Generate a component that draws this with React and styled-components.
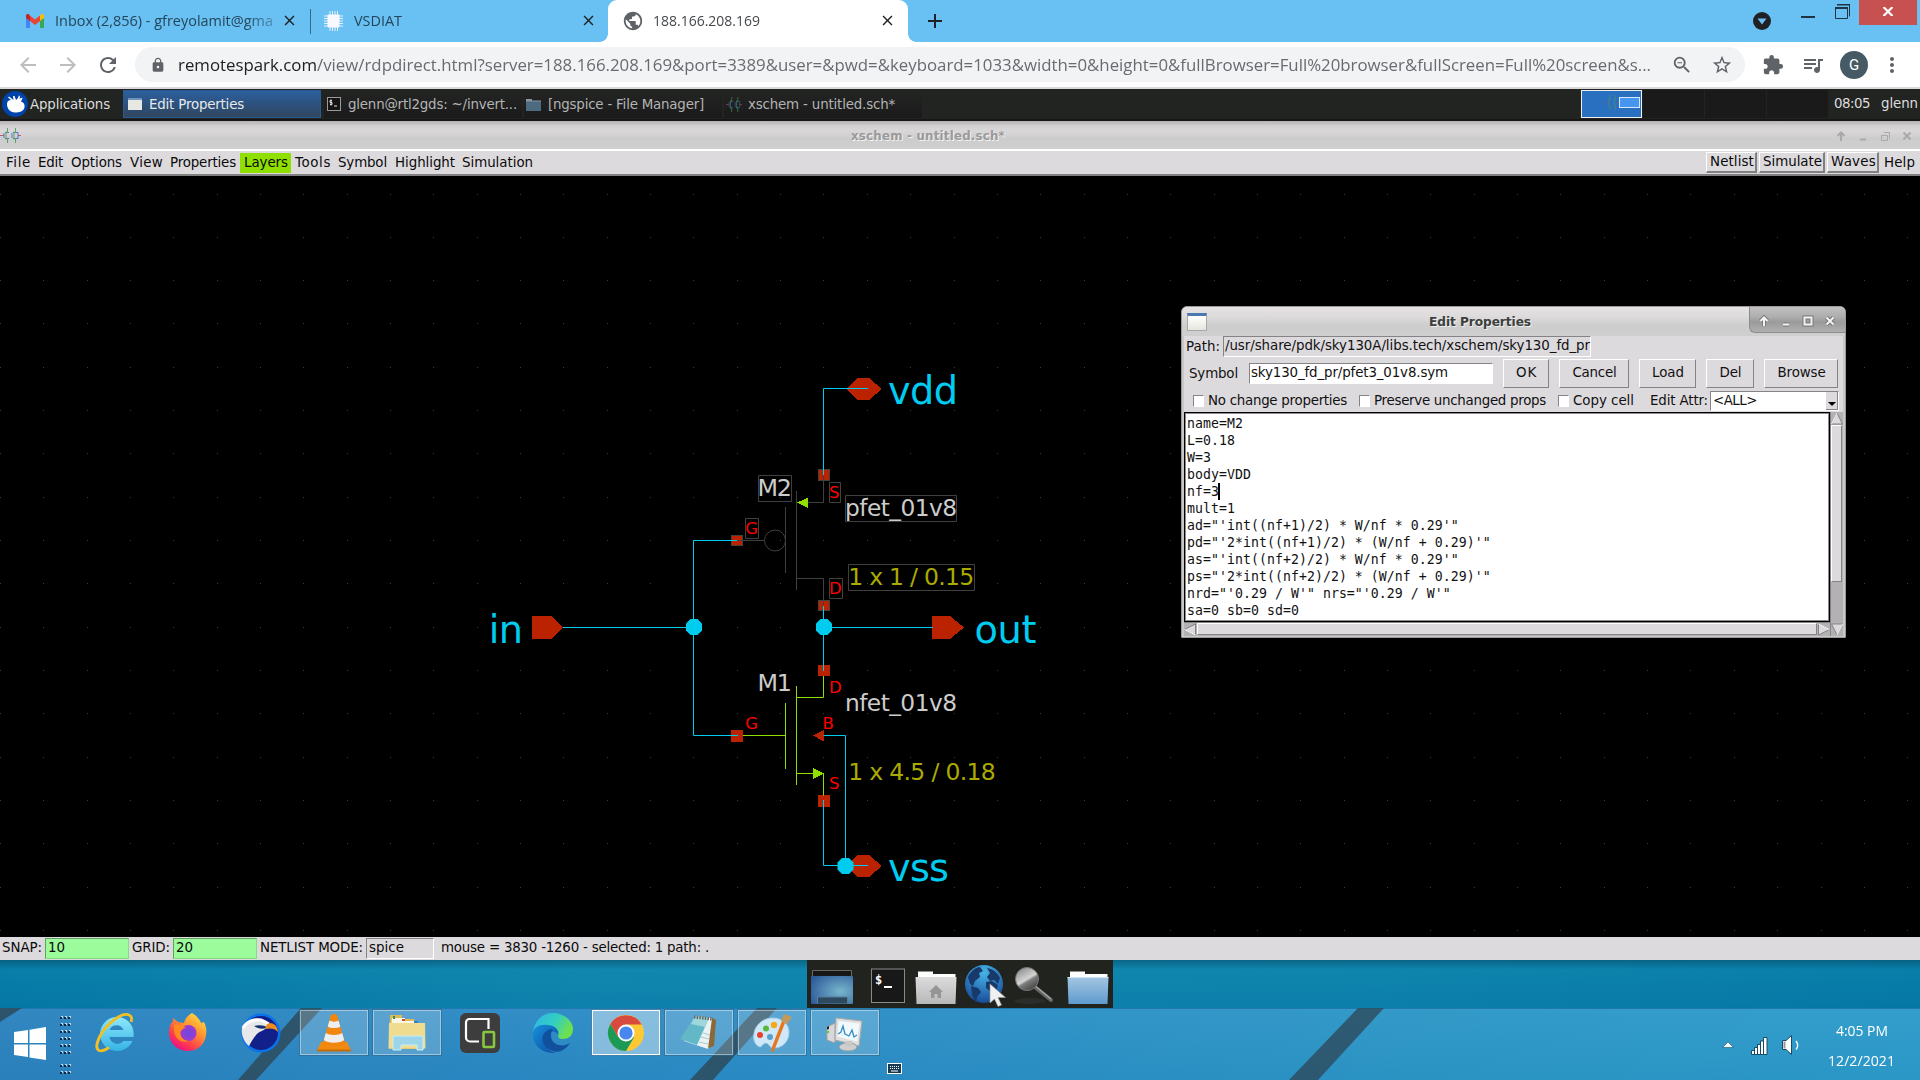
import React, { useLayoutEffect, useRef } from "react";
import styled, { createGlobalStyle, css } from "styled-components";
import {
  MdArrowBack, MdArrowForward, MdRefresh, MdLock, MdZoomOut, MdStarBorder,
  MdExtension, MdQueueMusic, MdMoreVert, MdPublic, MdClose, MdAdd,
} from "react-icons/md";

const GlobalStyle = createGlobalStyle`
  * { box-sizing: border-box; }
  html, body { margin: 0; padding: 0; background: #000; }
  body { width: 1920px; height: 1080px; overflow: hidden; }
  svg { display: block; flex: none; }
`;

const TK = `"DejaVu Sans", Verdana, sans-serif`;
const UI = `"Open Sans", "Noto Sans", sans-serif`;

/* ---------- text that settles into a given width ---------- */

const FitBox = styled.span`
  display: block;
  flex: none;
  width: ${(p) => p.$w}px;
  margin-left: ${(p) => p.$ml || 0}px;
  white-space: pre;
`;
const FitInner = styled.span`
  display: inline-block;
  transform-origin: 0 50%;
`;

function Fit({ w, ml, squeeze, children }) {
  const ref = useRef(null);
  useLayoutEffect(() => {
    const el = ref.current;
    el.style.letterSpacing = "0px";
    el.style.transform = "none";
    const natural = el.getBoundingClientRect().width;
    const target = w + 1;
    if (squeeze) el.style.transform = `scaleX(${target / natural})`;
    else el.style.letterSpacing = `${(target - natural) / el.textContent.length}px`;
  });
  return (
    <FitBox $w={w} $ml={ml}>
      <FitInner ref={ref}>{children}</FitInner>
    </FitBox>
  );
}

/* ---------- page ---------- */

const Screen = styled.div`
  position: relative;
  width: 1920px;
  height: 1080px;
  overflow: hidden;
  display: flex;
  flex-direction: column;
  background: #000;
`;

/* ---------- browser ---------- */

const TabStrip = styled.div`
  display: flex;
  height: 42px;
  flex: none;
  background: #69c0f2;
  font: 14.7px/34px ${UI};
  color: #25465a;
`;
const Tab = styled.div`
  display: flex;
  align-items: center;
  width: ${(p) => p.$w}px;
  height: 42px;
  padding: 0 ${(p) => p.$pr}px 1px ${(p) => p.$pl}px;
  position: relative;
  flex: none;
  ${(p) => p.$active && css`
    background: #fff;
    border-radius: 9px 9px 0 0;
    color: #45484c;
    &::before, &::after {
      content: "";
      position: absolute;
      bottom: 0;
      width: 8px;
      height: 8px;
    }
    &::before { left: -8px; background: radial-gradient(circle at 0 0, transparent 7.5px, #fff 8px); }
    &::after { right: -8px; background: radial-gradient(circle at 100% 0, transparent 7.5px, #fff 8px); }
  `}
`;
const TabTitle = styled.div`
  flex: 1;
  margin-left: ${(p) => p.$ml}px;
  padding-bottom: 2px;
  ${(p) => p.$fade && css`mask-image: linear-gradient(90deg, #000 84%, transparent 104%);`}
`;
const TabClose = styled.div`
  color: #202124;
`;
const TabRule = styled.div`
  width: 1px;
  height: 25px;
  margin-top: 9px;
  background: #38688a;
`;
const NewTab = styled.div`
  margin: 9px 0 0 15px;
  color: #202124;
`;
const WindowControls = styled.div`
  display: flex;
  margin-left: auto;
  padding-right: 3px;
`;
const Update = styled.div`
  width: 18px;
  height: 18px;
  margin: 12px 30px 0 0;
`;
const Minimize = styled.div`
  width: 14px;
  height: 2px;
  margin: 16px 20px 0 0;
  background: #1f3440;
`;
const Restore = styled.div`
  margin: 4px 9px 0 0;
`;
const CloseWindow = styled.div`
  width: 58px;
  height: 25px;
  background: #c75050;
  display: flex;
  align-items: center;
  justify-content: center;
  padding-bottom: 2px;
`;

const Toolbar = styled.div`
  display: flex;
  align-items: center;
  height: 47px;
  flex: none;
  background: #fff;
  border-bottom: 2px solid #dadadb;
  padding: 0 0 0 16px;
  color: #5f6368;
`;
const NavButton = styled.div`
  width: 24px;
  margin-right: ${(p) => p.$mr}px;
  color: ${(p) => (p.$off ? "#bdbec0" : "#5f6368")};
`;
const Omnibox = styled.div`
  display: flex;
  align-items: center;
  width: 1610px;
  height: 35px;
  border-radius: 18px;
  background: #f1f3f4;
  padding: 0 12px 0 15px;
`;
const Url = styled.div`
  flex: 1;
  margin-left: 12px;
  font: 17.2px/32px ${UI};
  color: #686b70;
  & b { font-weight: 400; color: #202124; }
`;
const OmniIcon = styled.div`
  margin-left: ${(p) => p.$ml}px;
`;
const Avatar = styled.div`
  width: 28px;
  height: 28px;
  margin: 0 12px 0 15px;
  border-radius: 50%;
  background: #455a64;
  color: #fff;
  font: 15px/28px Roboto, ${UI};
  text-align: center;
`;

/* ---------- remote desktop panel ---------- */

const Panel = styled.div`
  display: flex;
  height: 32px;
  flex: none;
  background: #222422;
  border-bottom: 2px solid #161616;
  padding-right: 3px;
  font: 13.4px/29px ${TK};
  color: #dcdcdc;
`;
const AppsButton = styled.div`
  display: flex;
  align-items: center;
  width: 123px;
  padding-left: 2px;
`;
const TaskItem = styled.div`
  display: flex;
  align-items: center;
  width: 198px;
  height: 28px;
  margin: 1px ${(p) => p.$mr}px 0 0;
  padding-left: ${(p) => p.$pl}px;
  color: ${(p) => (p.$active ? "#e6e9ec" : "#b4b4b4")};
  background: ${(p) => (p.$active ? "linear-gradient(#2c5f9c, #2d4f78 60%, #31475f)" : "linear-gradient(#232523, #1a1a1a)")};
  border: ${(p) => (p.$active ? "1px solid #275a93" : "0")};
`;
const Pager = styled.div`
  display: flex;
  gap: 1px;
  margin: 1px 0 0 auto;
  height: 28px;
`;
const PagerCell = styled.div`
  width: 61px;
  height: 28px;
  background: #1a1a1a;
  ${(p) => p.$active && css`
    background: #2a70c0;
    border: 1px solid #f0f0f0;
    display: flex;
    align-items: center;
    justify-content: flex-end;
    padding: 0 1px 3px 0;
  `}
`;
const PagerWindow = styled.div`
  width: 21px;
  height: 11px;
  background: #4696f0;
  border: 1px solid #d8e8fa;
`;

/* ---------- schematic editor ---------- */

const TitleBar = styled.div`
  display: flex;
  align-items: center;
  height: 28px;
  flex: none;
  background: linear-gradient(#b4b2b3, #d4d1d3 18%, #dad7d9 35%, #cdcccd 62%, #cfcfcf);
  color: #9a9a9a;
  font: bold 11.8px/26px ${TK};
  text-shadow: 1px 1px 0 #f2f2f2;
  padding: 1px 5px 0 0;
`;
const TitleSpring = styled.div`
  width: ${(p) => p.$w}px;
`;
const TitleGlyphs = styled.div`
  display: flex;
  gap: 6px;
  margin-left: auto;
`;
const MenuBar = styled.div`
  display: flex;
  align-items: center;
  height: 27px;
  flex: none;
  background: #dddade;
  border-top: 2px solid #fff;
  border-bottom: 2px solid #808080;
  padding-right: 6px;
  font: 13.4px/19px ${TK};
  color: #0a0a0a;
`;
const LayersItem = styled.div`
  width: 51px;
  height: 20px;
  margin: 0 4px 0 5px;
  padding-left: 4px;
  background: #8fe000;
`;
const MenuSpring = styled.div`flex: 1;`;
const RaisedItem = styled.div`
  width: ${(p) => p.$w}px;
  height: 21px;
  margin-right: 2px;
  padding-left: 3px;
  line-height: 18px;
  border: solid;
  border-width: 1px 2px 2px 1px;
  border-color: #fff #808080 #808080 #fff;
`;
const Canvas = styled.div`
  flex: none;
  height: 761px;
  background: #000;
`;
const StatusBar = styled.div`
  display: flex;
  align-items: center;
  height: 23px;
  flex: none;
  padding-bottom: 1px;
  background: #dddade;
  font: 13.4px/20px ${TK};
  color: #0a0a0a;
`;
const StatusField = styled.div`
  width: ${(p) => p.$w}px;
  height: 21px;
  margin: 0 3px 0 4px;
  padding-left: 2px;
  line-height: 18px;
  background: ${(p) => (p.$green ? "#9cfc9c" : "#dddade")};
  border: 1px solid;
  border-color: ${(p) => (p.$green ? "#629f62 #84dc84 #84dc84 #629f62" : "#858385 #fff #fff #858385")};
`;

const Dialog = styled.div`
  position: absolute;
  left: 1181px;
  top: 306px;
  width: 665px;
  height: 332px;
  background: #dddade;
  border: 1px solid #9b9b9b;
  border-radius: 6px 6px 1px 1px;
  overflow: hidden;
  font: 13.4px/20px ${TK};
  color: #111;
  display: flex;
  flex-direction: column;
`;
const DialogTitle = styled.div`
  display: flex;
  align-items: center;
  height: 29px;
  flex: none;
  padding-left: 5px;
  background: linear-gradient(#e6e2e5, #dcdadb 35%, #cdcdcd 65%, #cfcfcf);
  font: bold 12.2px/26px ${TK};
  color: #3c3f3c;
  text-shadow: 1px 1px 0 #f0f0f0;
`;
const DialogIcon = styled.div`
  width: 20px;
  height: 18px;
  background: linear-gradient(#fff, #e4e6dc);
  border: 1px solid #a8a8a8;
  border-top: 3px solid #4a78b0;
`;
const DialogButtons = styled.div`
  display: flex;
  gap: 6px;
  align-self: flex-start;
  margin-left: auto;
  width: 96px;
  height: 26px;
  padding: 6px 0 0 6px;
  background: linear-gradient(#c2c0c2, #aeadae 40%, #9c9b9c 60%, #b0afb0);
  border-left: 1px solid #8c8c8c;
  border-bottom: 1px solid #8c8c8c;
  border-bottom-left-radius: 6px;
`;
const DialogBody = styled.div`
  flex: 1;
  display: flex;
  flex-direction: column;
  border: solid #c8c8c8;
  border-width: 0 2px 2px 2px;
`;
const Row = styled.div`
  display: flex;
  align-items: center;
  flex: none;
  height: ${(p) => p.$h}px;
  padding: 0 0 1px ${(p) => p.$pl}px;
`;
const Entry = styled.div`
  width: ${(p) => p.$w}px;
  height: 21px;
  margin-left: ${(p) => p.$ml}px;
  padding-left: 1px;
  line-height: 18px;
  background: ${(p) => (p.$white ? "#fff" : "#dddade")};
  border: 1px solid;
  border-color: #858385 #fff #fff #858385;
`;
const TkButton = styled.div`
  width: ${(p) => p.$w}px;
  height: 29px;
  margin-left: 10px;
  line-height: 26px;
  display: flex;
  justify-content: center;
  border: 1px solid;
  border-color: #fff #858385 #858385 #fff;
`;
const Check = styled.div`
  width: 11px;
  height: 12px;
  margin: 0 4px 0 ${(p) => p.$ml}px;
  background: #fff;
  border: 1px solid;
  border-color: #858385 #fff #fff #858385;
`;
const Combo = styled.div`
  display: flex;
  width: 129px;
  height: 20px;
  margin-left: 3px;
  padding-left: 2px;
  line-height: 18px;
  background: #fff;
  border: 1px solid;
  border-color: #858385 #fff #fff #858385;
`;
const ComboArrow = styled.div`
  display: flex;
  align-items: flex-end;
  justify-content: center;
  width: 12px;
  height: 18px;
  padding-bottom: 3px;
  margin-left: auto;
  background: #dddade;
  border-right: 1px solid #858385;
  border-bottom: 1px solid #858385;
`;
const EditorGrid = styled.div`
  display: grid;
  grid-template-columns: 646px 13px;
  grid-template-rows: 210px 14px;
`;
const Editor = styled.div`
  background: #fff;
  border: 1px solid #000;
  outline: 1px solid #8d8b8d;
  outline-offset: -2px;
  padding: 2px 0 0 2px;
  font: 13.2px/17px "DejaVu Sans Mono", "Liberation Mono", monospace;
  letter-spacing: 0.054px;
  color: #111;
  white-space: pre;
  overflow: hidden;
`;
const Line = styled.div`
  display: flex;
  height: 17px;
`;
const Caret = styled.span`
  width: 2px;
  height: 17px;
  margin-left: -1px;
  background: #000;
`;
const VScroll = styled.div`
  grid-row: 1 / 3;
  grid-column: 2;
  display: flex;
  flex-direction: column;
  justify-content: space-between;
  background: #b4b1b4;
  border-left: 1px solid #858385;
`;
const ScrollRun = styled.div`
  flex: 1;
`;
const HScroll = styled.div`
  display: flex;
  background: #b4b1b4;
  border-top: 1px solid #858385;
`;
const Thumb = styled.div`
  width: ${(p) => p.$w}px;
  height: ${(p) => p.$h}px;
  margin: ${(p) => p.$m || "0"};
  background: #dddade;
  border: 1px solid;
  border-color: #fff #858385 #858385 #fff;
`;

/* ---------- wallpaper, dock, taskbar ---------- */

const Wallpaper = styled.div`
  display: flex;
  justify-content: center;
  height: 48px;
  flex: none;
  background:
    linear-gradient(rgba(0, 50, 75, .4), transparent 20%),
    linear-gradient(90deg, transparent, rgba(40, 160, 190, .24) 30%, rgba(40, 160, 190, .2) 70%, transparent),
    linear-gradient(#0a80aa, #0577a5);
`;
const Dock = styled.div`
  display: flex;
  width: 306px;
  height: 48px;
  background: #21231f;
`;
const TaskBar = styled.div`
  position: relative;
  height: 72px;
  flex: none;
  display: flex;
  background: linear-gradient(rgba(255, 255, 255, .04), rgba(0, 0, 0, .02)), linear-gradient(90deg, #2a82be, #2a8cc6 40%, #2b96c6 75%, #2b9aca);
  border-top: 1px solid #2079ae;
`;
const Shades = styled.div`
  position: absolute;
  inset: -1px 0 0 0;
`;
const StartArea = styled.div`
  display: flex;
  width: 80px;
  padding: 18px 0 0 14px;
  position: relative;
`;
const Grip = styled.div`
  margin: -12px 0 0 14px;
`;
const TaskButton = styled.div`
  position: relative;
  display: flex;
  align-items: center;
  justify-content: center;
  width: 70px;
  height: 47px;
  margin-right: 3px;
  flex: none;
  ${(p) => p.$on && css`
    background: rgba(255, 255, 255, ${p.$focus ? 0.42 : 0.2});
    border: 1px solid rgba(20, 80, 120, .55);
    box-shadow: inset 0 0 0 1px rgba(255, 255, 255, ${p.$focus ? 0.95 : 0.42});
  `}
`;
const Keyboard = styled.div`
  margin: 54px 0 0 4px;
`;
const Tray = styled.div`
  display: flex;
  margin-left: auto;
  padding-right: 25px;
`;
const TrayIcon = styled.div`
  margin: ${(p) => p.$mt}px 0 0 ${(p) => p.$ml || 0}px;
`;
const Clock = styled.div`
  display: flex;
  flex-direction: column;
  align-items: center;
  gap: 10px;
  width: 68px;
  margin: 11px 0 0 27px;
  font: 14.7px/20px ${UI};
  color: #fff;
`;

/* ---------- small drawings ---------- */

const Gmail = () => (
  <svg width="18" height="14" viewBox="0 0 18 14">
    <path d="M0 2v11a1 1 0 0 0 1 1h3V5z" fill="#4285f4" />
    <path d="M18 2v11a1 1 0 0 1-1 1h-3V5z" fill="#34a853" />
    <path d="M14 1.500V7l4-3V2c0-2-2-2.500-3-1.500z" fill="#fbbc04" />
    <path d="M0 2v2l4 3V1.500L3 .5C2-.5 0 0 0 2z" fill="#c5221f" />
    <path d="M4 1.500V7l5 4 5-4V1.500L9 5.400z" fill="#ea4335" />
  </svg>
);
const Chip = () => (
  <svg width="19" height="20" viewBox="0 0 19 20">
    <path d="M6 0v20M8.500 0v20M11 0v20M13.500 0v20M0 5h19M0 7.500h19M0 10h19M0 12.500h19M0 15h19" stroke="#e6f3fd" strokeWidth="1" />
    <rect x="3.500" y="3.500" width="12" height="13" rx="1" fill="#faf8ff" />
  </svg>
);
const Mouse = () => (
  <svg width="26" height="26" viewBox="0 0 26 26">
    <circle cx="13" cy="13" r="13" fill="#0044aa" />
    <path d="M5 13c0-3 2-4 4-4L6 6.500l1-1L11.500 9 11 5h1.500l1.500 4c2-1 2-3 3-4.500 1.200 0 1 2 .5 3.500 1.500-1 2-1.500 3-1 0 1.500-1.500 2.500-1.500 3.500 3 1 4 3 3.500 6-1 4-5 5-9.500 5-5 0-8-4-8-8.500z" fill="#fff" />
  </svg>
);
const SmallWindow = () => (
  <svg width="14" height="12" viewBox="0 0 14 12">
    <rect width="14" height="12" fill="#e8e8e2" /><rect width="14" height="2" fill="#6f94bd" />
  </svg>
);
const SmallTerm = () => (
  <svg width="14" height="14" viewBox="0 0 14 14">
    <rect x=".5" y=".5" width="13" height="13" fill="#141414" stroke="#9a9a9a" />
    <path d="M5 3.500H3v2h2v2H3M4 2.500v6M7 9h3" stroke="#ddd" fill="none" />
  </svg>
);
const SmallFolder = () => (
  <svg width="15" height="13" viewBox="0 0 15 13">
    <path d="M0 1h6v1.500h9V13H0z" fill="#8a959d" /><rect y="3.500" width="15" height="9.500" fill="#4c6a80" />
  </svg>
);
const MosIcon = ({ w = 21, dim }) => (
  <svg width={w} height="15" viewBox="0 0 21 15" preserveAspectRatio="none" fill="none" opacity={dim ? 0.7 : 0.85}>
    <path d="M0 7.500h3M18 7.500h3" stroke="#d04040" />
    <path d="M4 5v5M4 7.500h-1M5 4.500h4M5 10.500h4M13 4.500h5M13 10.500h5M12 5v5M18 4.500v6" stroke="#3d63c8" />
    <path d="M7.500 0v5M7.500 10v5M15.500 0v5M15.500 10v5M6 3.500v8M14 3.500v8" stroke="#4a9a58" />
  </svg>
);

const WinGlyph = ({ kind, color, outline }) => {
  const d = {
    up: "M8 13V5M4.500 8 8 4.500 11.500 8",
    min: "M5 11.500h6",
    max: "M4.500 4.500h7v7h-7z",
    restore: "M4.500 7.500h6v5h-6zM7 4.500h5.500v6",
    close: "M4.500 4.500l7 7M11.500 4.500l-7 7",
  }[kind];
  return (
    <svg width="16" height="16" viewBox="0 0 16 16" fill="none">
      {outline && <path d={d} stroke={outline} strokeWidth="4" />}
      <path d={d} stroke={color} strokeWidth={kind === "restore" ? 1 : 2} />
    </svg>
  );
};
const Arrow = ({ dir }) => {
  const r = { up: 0, right: 90, down: 180, left: 270 }[dir];
  return (
    <svg width="12" height="13" viewBox="0 0 12 12">
      <g transform={`rotate(${r} 6 6)`}>
        <path d="M6 .5 11.500 11.500H.5z" fill="#dddade" stroke="#858385" />
        <path d="M.5 11.500 6 .5" stroke="#fff" />
      </g>
    </svg>
  );
};

/* ---------- schematic ---------- */

const PITCH = 43.35;
const gridDots = [];
for (let r = 0; r < 18; r += 1)
  for (let c = 0; c < 45; c += 1)
    gridDots.push([Math.round(c * PITCH - 0.2), Math.round(193.5 + r * 43.33)]);

const Label = ({ x, y, s, w, fill, children }) => (
  <text x={x} y={y} fontSize={s} fill={fill} textLength={w} fontFamily={'"DejaVu Sans", sans-serif'}>{children}</text>
);
const Octagon = ({ x, y }) => (
  <path d={`M${x - 3.5} ${y - 8}h7l4.500 4.500v7l-4.500 4.500h-7l-4.500-4.500v-7z`} fill="#00ccf0" />
);

function Schematic() {
  const C = "#00ccf0", R = "#bb2200", G = "#8fe000", K = "#404040", T = "#ff0000", W = "#cccccc", Y = "#aaaa00";
  return (
    <svg width="1920" height="761" viewBox="0 176 1920 761">
      <g fill="#3c3c3c" shapeRendering="crispEdges">
        {gridDots.map(([x, y]) => <rect key={`${x}-${y}`} x={x} y={y} width="1" height="1" />)}
      </g>
      <g fill={R} shapeRendering="crispEdges">
        <path d="M532 616h19l12.500 11.500L551 639h-19zM932 616h18l14 11.500L950 639h-18zM846 389l11.500-11h11.500l13 11-13 11h-11.500zM846 866l11.500-11h11.500l13 11-13 11h-11.500z" />
        <path d="M731 535h12v11h-12zM731 730h12v12h-12zM818 469h12v12h-12zM818 600h12v11h-12zM818 795h12v12h-12zM813 735.500l11-5.500v11.500z" />
      </g>
      <g fill="none" stroke={K}>
        <path d="M731.500 535.500h11v10h-11zM818.500 469.500h11v11h-11zM818.500 600.500h11v10h-11z" />
        <path d="M737 540.500h27M785.500 507v66M796.500 491v99M796.500 502.500h27v-27M796.500 578.500h27v27M807.500 497.500v10" />
        <circle cx="775" cy="540.500" r="10.500" />
        <path d="M758.500 475.500h33v26h-33zM829.500 482.500h11v20h-11zM745.500 518.500h13v20h-13zM829.500 578.500h13v20h-13zM845.500 495.500h111v26h-111zM848.500 564.500h126v26h-126z" />
      </g>
      <g fill="none" stroke={G}>
        <path d="M823.500 671v26.500h-27M796.500 686v99M785.500 703v66M737 735.500h48M796.500 773.500h27v22" />
      </g>
      <path d="M797 502.500l10.500-4.500v9.500zM813 768l11 5.500-11 5.500z" fill={G} shapeRendering="crispEdges" />
      <path d="M818 665h12v11h-12zM731 730h12v12h-12z" fill={R} />
      <g fill="none" stroke={C}>
        <path d="M563 627.500h130M737 540.500h-43.500v195h44.500M868 388.500h-44.500V475M823.500 606v65M824 627.500h109M823.500 800v65.500h44.500M823.500 735.500h22v130" />
      </g>
      <Octagon x={694} y={627} /><Octagon x={824} y={627} /><Octagon x={845.5} y={866} />
      <Label x={488.8} y={643} s={38.3} w={34.3} fill={C}>in</Label>
      <Label x={888} y={404} s={38.3} w={70} fill={C}>vdd</Label>
      <Label x={974.5} y={643} s={38.3} w={62} fill={C}>out</Label>
      <Label x={888} y={881} s={38.3} w={61} fill={C}>vss</Label>
      <Label x={757.5} y={496} s={23.8} w={34.5} fill={W}>M2</Label>
      <Label x={757.5} y={691} s={23.8} w={34.5} fill={W}>M1</Label>
      <Label x={845} y={516} s={23.3} w={112} fill={W}>pfet_01v8</Label>
      <Label x={845} y={711} s={23.3} w={112} fill={W}>nfet_01v8</Label>
      <Label x={848.2} y={585} s={23.5} w={126} fill={Y}>1 x 1 / 0.15</Label>
      <Label x={848.2} y={780} s={23.5} w={147.5} fill={Y}>1 x 4.5 / 0.18</Label>
      <Label x={745.3} y={533.5} s={16.5} fill={T}>G</Label>
      <Label x={745.3} y={728.5} s={16.5} fill={T}>G</Label>
      <Label x={829} y={497.5} s={16.5} fill={T}>S</Label>
      <Label x={829} y={789} s={16.5} fill={T}>S</Label>
      <Label x={829} y={594.3} s={16.5} fill={T}>D</Label>
      <Label x={829} y={693} s={16.5} fill={T}>D</Label>
      <Label x={822.5} y={729} s={16.5} fill={T}>B</Label>
    </svg>
  );
}

/* ---------- dock drawing ---------- */

const DockArt = () => (
  <svg width="306" height="48" viewBox="807 960 306 48">
    <defs>
      <radialGradient id="desk" cx=".7" cy=".55" r=".8"><stop offset="0" stopColor="#78b6cc" /><stop offset="1" stopColor="#2d5a9a" /></radialGradient>
      <linearGradient id="fgray" x2="0" y2="1"><stop offset="0" stopColor="#dcdcdc" /><stop offset="1" stopColor="#b8b8b8" /></linearGradient>
      <linearGradient id="fblue" x2="0" y2="1"><stop offset="0" stopColor="#a4c6e2" /><stop offset="1" stopColor="#5f9bce" /></linearGradient>
      <radialGradient id="glb" cx=".5" cy=".2" r=".9"><stop offset="0" stopColor="#46b4e6" /><stop offset="1" stopColor="#123f90" /></radialGradient>
      <linearGradient id="lens" x1=".2" x2=".8" y2="1"><stop offset="0" stopColor="#8a8a8a" /><stop offset=".5" stopColor="#d4d4d4" /><stop offset=".6" stopColor="#7c7c7c" /><stop offset="1" stopColor="#3c3c3c" /></linearGradient>
    </defs>
    <path d="M812.500 976v-5.500h39v5.500" fill="#161716" stroke="#686868" />
    <rect x="811" y="976" width="42" height="28" rx="1" fill="url(#desk)" />
    <path d="M817.500 1003.500v-6.500h30v6.500" fill="#2e4a5e" stroke="#547f9e" />
    <rect x="871.5" y="969" width="33" height="33.500" fill="#171817" stroke="#8a8a8a" />
    <text x="875" y="984" fontSize="12" fontWeight="700" fontFamily="DejaVu Sans Mono, monospace" fill="#fff">$</text>
    <path d="M884 987h8" stroke="#fff" strokeWidth="2" />
    <path d="M918 973v-1.500h15v2.500h22.500v4h-37.500z" fill="#fdfdfd" /><path d="M915.500 977h41l-1 27h-39z" fill="url(#fgray)" />
    <path d="M936 985l7 7h-2v6h-3.500v-4h-3v4H931v-6h-2z" fill="#959595" />
    <circle cx="984" cy="984" r="19" fill="url(#glb)" />
    <path d="M968 977c3-6 8-10 12-10l3 4-4 2 1 4-5 4-2 5-3-2zM971 986l7 2 3 4-4 5-1 6-4-8zM987 968c6 1 11 5 13 10l-2 6-4-4-4 1-3-4 3-4zM986 982l6-1 6 4-2 8-4 5-2-7-4-3z" fill="#173a6a" />
    <path d="M990 984v19l4.500-4 3.500 7.500 3.500-1.500-3.500-7.500h7.500z" fill="#f0f0f0" stroke="#999" strokeWidth=".6" />
    <ellipse cx="1030" cy="1001" rx="16" ry="3" fill="#2c2c2c" />
    <path d="M1036 988l15 12" stroke="#666" strokeWidth="4" strokeLinecap="round" /><path d="M1036 986.500l15 12.500" stroke="#aaa" strokeWidth="1.200" />
    <circle cx="1027" cy="979" r="11.500" fill="url(#lens)" stroke="#777" />
    <path d="M1070 973v-1.500h15v2.500h22.500v4h-37.500z" fill="#fdfdfd" /><path d="M1067.500 977h41l-1 27h-39z" fill="url(#fblue)" />
    <path d="M1067.500 977.500h41" stroke="#cfe2f2" />
  </svg>
);

/* ---------- taskbar icons (all on a 40 unit square) ---------- */

const Icon40 = ({ children }) => <svg width="40" height="40" viewBox="0 0 40 40">{children}</svg>;

const icons = {
  ie: (
    <Icon40>
      <defs><linearGradient id="ieb" x2="0" y2="1"><stop offset="0" stopColor="#8fe8fb" /><stop offset="1" stopColor="#35b3e6" /></linearGradient></defs>
      <path d="M22 4a17 17 0 1 0 15.500 24h-9a8 8 0 0 1-14-4H38.500C40 12 32 4 22 4zm-7.500 13a7.500 7.500 0 0 1 14 0z" fill="url(#ieb)" fillRule="evenodd" />
      <path d="M36 9c1-3 1-6-2-7C27-1 12 10 5 23 1 31 1 36 4 37.500c3 1 7-1 10-3" fill="none" stroke="#f1c023" strokeWidth="2.800" />
    </Icon40>
  ),
  firefox: (
    <Icon40>
      <defs>
        <linearGradient id="ffo" x1="1" x2=".3" y2="1"><stop offset="0" stopColor="#fff04a" /><stop offset=".45" stopColor="#ff9430" /><stop offset=".8" stopColor="#ff3850" /><stop offset="1" stopColor="#e81088" /></linearGradient>
        <radialGradient id="ffp"><stop offset="0" stopColor="#6a48e0" /><stop offset="1" stopColor="#a03ad0" /></radialGradient>
      </defs>
      <path d="M24 0c6 4 8 7 9 10l3-1c2 4 3 8 2 13C37 32 29 38 20 38 9 38 1 30 1 20c0-5 1-9 4-12v-3l5 4 6 1c1-4 4-8 8-10z" fill="url(#ffo)" />
      <circle cx="20.5" cy="20" r="8" fill="url(#ffp)" />
      <path d="M6 12c4-1 9 0 12 3-3 0-4 2-6 4 0 5 4 9 9 9-9 3-16-3-15-16z" fill="#ff8a20" />
    </Icon40>
  ),
  eagle: (
    <Icon40>
      <circle cx="20" cy="20" r="19.500" fill="#0a72ea" /><circle cx="20" cy="20" r="17" fill="#12208a" />
      <path d="M1 15C4 8 12 4 20 6c5 1 8 3 9 6l-4 3c-2 3-7 3-10 7-3 4-5 7-7 11C3 29 0 22 1 15z" fill="#e8e8ea" />
      <path d="M2 15C6 8 14 6 20 7l8 4" stroke="#fff" strokeWidth="3" fill="none" />
      <path d="M13 13c3-1 7-1 11 0l2 2-5 .800c-3 0-5-1-8-2.800z" fill="#12306e" />
      <path d="M26 11c5-2 10 0 11 8-3-4-8-4-13-3z" fill="#f08c1c" />
    </Icon40>
  ),
  vlc: (
    <Icon40>
      <path d="M7 29h26l4 8.500H3z" fill="#f08a10" /><path d="M3 36.500h34v2H3z" fill="#c96a05" />
      <path d="M17 2c1-1.500 5-1.500 6 0l8 28c-3 4-19 4-22 0z" fill="#f3860c" />
      <path d="M15.500 7.500c2 1.500 7 1.500 9 0l1.800 6c-3 2-9.500 2-12.600 0zM11.800 20c3.500 2.500 13 2.500 16.400 0l2 7c-4 3.500-16.500 3.500-20.400 0z" fill="#eeeeee" />
    </Icon40>
  ),
  explorer: (
    <Icon40>
      <path d="M3 2h12v4h12l1 4h9v26H2z" fill="#d9bb5c" /><path d="M5 5h13v3h13v3h7v5H4z" fill="#fbf7e6" />
      <path d="M2 10h36l.5 25.500H1.500z" fill="#f0dc8e" />
      <path d="M6 3h2v3H6z" fill="#3a8e50" /><path d="M15 6h3v2h-3z" fill="#d04a30" /><path d="M27 8h4v2h-4z" fill="#3a80c0" />
      <path d="M6 23h30v14h-6v-5H14v5H6z" fill="#9cd5ea" stroke="#cceef8" />
    </Icon40>
  ),
  screens: (
    <Icon40>
      <rect width="40" height="40" rx="6" fill="#3d3d3d" />
      <path d="M19 28.500h-9a4 4 0 0 1-4-4v-15a3.500 3.500 0 0 1 3.500-3.500H28.500v10" fill="none" stroke="#fff" strokeWidth="2.200" />
      <rect x="23.500" y="19" width="10.500" height="15" rx="1" fill="none" stroke="#8bc63f" strokeWidth="2.600" />
    </Icon40>
  ),
  edge: (
    <Icon40>
      <defs>
        <linearGradient id="ed1" x2="1" y2=".4"><stop offset="0" stopColor="#2db4ea" /><stop offset=".6" stopColor="#34cfc0" /><stop offset="1" stopColor="#6ee04e" /></linearGradient>
        <linearGradient id="ed2" x2="1" y2="1"><stop offset="0" stopColor="#1690dc" /><stop offset="1" stopColor="#0c4ba0" /></linearGradient>
      </defs>
      <path d="M0 20C1 8 9 0 20 0s20 8 20 16c0 7-5 10-10 10-4 0-5-1.500-5-3 2-4-1-9-8-9C8 14 2 17 0 20z" fill="url(#ed1)" />
      <path d="M0 20c1-6 7-9 14-8 8 0 12 5 11 9-6-5-13-2-13 6 0 8 6 13 12 13-14 1-25-7-24-20z" fill="url(#ed2)" />
      <path d="M18 16c-9 2-12 12-4 19 7 6 17 5 23-5-6 4-15 3-18-3-2-4-1-8 1-10z" fill="#11509c" />
    </Icon40>
  ),
  chrome: (
    <Icon40>
      <circle cx="20" cy="20" r="18" fill="#fcc934" />
      <path d="M4.400 11A18 18 0 0 1 35.600 11.500H20L12 24z" fill="#d94a3e" />
      <path d="M4.400 11A18 18 0 0 0 20 38l8-13.500-8-4.500-8 4z" fill="#1b9a57" />
      <circle cx="20" cy="20" r="8.500" fill="#fff" /><circle cx="20" cy="20" r="6.600" fill="#4a86f0" />
    </Icon40>
  ),
  notepad: (
    <Icon40>
      <path d="M32 4l5 3-2 26-8 3z" fill="#8a6838" />
      <path d="M16 3l17 2-4 31-24-8z" fill="#e9f3f3" />
      <path d="M16 3l14 2L18 32 1 26z" fill="#62b8c6" /><path d="M16 3l14 2-4 9-14-3z" fill="#9fd8dc" />
      <path d="M15 4l18 2" stroke="#666" strokeWidth="3.200" strokeDasharray="1.500 1.200" />
      <path d="M24 20l7 2M22 24l8 2M20 29l9 2" stroke="#b0c8cc" />
    </Icon40>
  ),
  paint: (
    <Icon40>
      <path d="M2 27C0 15 9 5 21 5c10 0 16 7 16 14 0 9-6 16-15 16-5 0-4-4-8-5-4 0-4 6-8 3-2-1-3-3-4-6z" fill="#cfe8f8" stroke="#a4cde8" />
      <circle cx="8" cy="22" r="3" fill="#e8402c" /><circle cx="14" cy="15.500" r="3" fill="#5cb83c" /><circle cx="22" cy="12" r="3.200" fill="#f5a81c" />
      <circle cx="18" cy="24" r="3" fill="#58a0cc" />
      <path d="M33 10 22 38l-3 1 1-5 10-26z" fill="#e8761c" /><path d="M29 8l3-7 8 3-5 7z" fill="#c49a5c" />
    </Icon40>
  ),
  monitor: (
    <Icon40>
      <path d="M2 14l8-4v20l-8-3z" fill="#d8d8d8" stroke="#a0a0a0" /><path d="M2 14l2-1v3l-2 .5z" fill="#222" /><circle cx="3" cy="19" r="1.200" fill="#5bd02a" />
      <path d="M11 5l26 3-3 25-24-6z" fill="#e0e0e0" stroke="#a8a8a8" /><path d="M13.500 8l21 2.500-2.500 18-19.500-5z" fill="#f2f9fd" />
      <path d="M13 21l3-2 2-6 2 8 4 2 3-6 2 7 3-2" fill="none" stroke="#2f8cc8" strokeWidth="1.300" />
      <ellipse cx="23" cy="34" rx="9" ry="4" fill="#cfcfcf" stroke="#9c9c9c" /><path d="M20 28h7v5h-7z" fill="#c8c8c8" />
    </Icon40>
  ),
};

const TASKS = [
  ["ie"], ["firefox"], ["eagle"], ["vlc", 1], ["explorer", 1], ["screens"], ["edge"],
  ["chrome", 1, 1], ["notepad", 1], ["paint", 1], ["monitor", 1],
];

const PROPS = [
  "name=M2", "L=0.18", "W=3", "body=VDD", "nf=3", "mult=1",
  `ad="'int((nf+1)/2) * W/nf * 0.29'"`,
  `pd="'2*int((nf+1)/2) * (W/nf + 0.29)'"`,
  `as="'int((nf+2)/2) * W/nf * 0.29'"`,
  `ps="'2*int((nf+2)/2) * (W/nf + 0.29)'"`,
  `nrd="'0.29 / W'" nrs="'0.29 / W'"`,
  "sa=0 sb=0 sd=0",
];

const gripRows = [1, 8, 15, 22, 29, 36, 49, 56];

export default function App() {
  return (
    <Screen>
      <GlobalStyle />
      <TabStrip>
        <Tab $w={310} $pl={26} $pr={12}>
          <Gmail />
          <TabTitle $ml={11} $fade><Fit w={217} squeeze>Inbox (2,856) - gfreyolamit@gma</Fit></TabTitle>
          <TabClose><MdClose size={17} /></TabClose>
        </Tab>
        <TabRule />
        <Tab $w={297} $pl={13} $pr={11}>
          <Chip />
          <TabTitle $ml={11}><Fit w={47} squeeze>VSDIAT</Fit></TabTitle>
          <TabClose><MdClose size={17} /></TabClose>
        </Tab>
        <Tab $w={300} $active $pl={14} $pr={12}>
          <MdPublic size={22} color="#5f6368" />
          <TabTitle $ml={9}><Fit w={106} squeeze>188.166.208.169</Fit></TabTitle>
          <TabClose><MdClose size={17} /></TabClose>
        </Tab>
        <NewTab><MdAdd size={24} /></NewTab>
        <WindowControls>
          <Update>
            <svg width="18" height="18" viewBox="0 0 18 18"><circle cx="9" cy="9" r="9" fill="#202124" /><path d="M4.500 6.500h9L9 12.500z" fill="#69c0f2" /></svg>
          </Update>
          <Minimize />
          <Restore>
            <svg width="15" height="15" viewBox="0 0 15 15" fill="none" stroke="#1f3440"><path d="M2 .5h12.500v12M.5 4h12v10.500H.5z" /><path d="M0 4h13M2 .5h13" strokeWidth="2" /></svg>
          </Restore>
          <CloseWindow>
            <svg width="12" height="9" viewBox="0 0 12 9"><path d="M1.500 0 10.500 9M10.500 0 1.500 9" stroke="#fff" strokeWidth="2.200" /></svg>
          </CloseWindow>
        </WindowControls>
      </TabStrip>

      <Toolbar>
        <NavButton $off $mr={16}><MdArrowBack size={24} /></NavButton>
        <NavButton $off $mr={16}><MdArrowForward size={24} /></NavButton>
        <NavButton $mr={15}><MdRefresh size={24} /></NavButton>
        <Omnibox>
          <MdLock size={16} />
          <Url>
            <Fit w={1472} squeeze><b>remotespark.com</b>/view/rdpdirect.html?server=188.166.208.169&amp;port=3389&amp;user=&amp;pwd=&amp;keyboard=1033&amp;width=0&amp;height=0&amp;fullBrowser=Full%20browser&amp;fullScreen=Full%20screen&amp;s...</Fit>
          </Url>
          <OmniIcon $ml={0}><MdZoomOut size={22} /></OmniIcon>
          <OmniIcon $ml={18}><MdStarBorder size={22} /></OmniIcon>
        </Omnibox>
        <OmniIcon $ml={17}><MdExtension size={22} /></OmniIcon>
        <OmniIcon $ml={17}><MdQueueMusic size={24} /></OmniIcon>
        <Avatar>G</Avatar>
        <MdMoreVert size={24} />
      </Toolbar>

      <Panel>
        <AppsButton><Mouse /><Fit w={79} ml={2}>Applications</Fit></AppsButton>
        <TaskItem $active $pl={4} $mr={3}><SmallWindow /><Fit w={94} ml={7}>Edit Properties</Fit></TaskItem>
        <TaskItem $pl={3} $mr={2}><SmallTerm /><Fit w={168} ml={7}>glenn@rtl2gds: ~/invert...</Fit></TaskItem>
        <TaskItem $pl={2} $mr={2}><SmallFolder /><Fit w={155} ml={7}>[ngspice - File Manager]</Fit></TaskItem>
        <TaskItem $pl={2} $mr={0}><MosIcon w={16} dim /><Fit w={146} ml={6}>xschem - untitled.sch*</Fit></TaskItem>
        <Pager>
          <PagerCell $active><MosIcon w={14} dim /><PagerWindow /></PagerCell>
          <PagerCell /><PagerCell /><PagerCell />
        </Pager>
        <Fit w={35} ml={6}>08:05</Fit>
        <Fit w={36} ml={12}>glenn</Fit>
      </Panel>

      <TitleBar>
        <MosIcon />
        <TitleSpring $w={830} />
        <Fit w={153}>xschem - untitled.sch*</Fit>
        <TitleGlyphs>
          {["up", "min", "restore", "close"].map((k) => <WinGlyph key={k} kind={k} color="#aaa9aa" />)}
        </TitleGlyphs>
      </TitleBar>

      <MenuBar>
        <Fit w={24} ml={6}>File</Fit>
        <Fit w={24} ml={8}>Edit</Fit>
        <Fit w={50} ml={9}>Options</Fit>
        <Fit w={32} ml={9}>View</Fit>
        <Fit w={65} ml={8}>Properties</Fit>
        <LayersItem><Fit w={43}>Layers</Fit></LayersItem>
        <Fit w={35}>Tools</Fit>
        <Fit w={48} ml={8}>Symbol</Fit>
        <Fit w={59} ml={9}>Highlight</Fit>
        <Fit w={70} ml={8}>Simulation</Fit>
        <MenuSpring />
        <RaisedItem $w={51}><Fit w={43}>Netlist</Fit></RaisedItem>
        <RaisedItem $w={66}><Fit w={58}>Simulate</Fit></RaisedItem>
        <RaisedItem $w={52}><Fit w={44}>Waves</Fit></RaisedItem>
        <Fit w={30} ml={3}>Help</Fit>
      </MenuBar>

      <Canvas><Schematic /></Canvas>

      <StatusBar>
        <Fit w={39} ml={2}>SNAP:</Fit>
        <StatusField $w={84} $green><Fit w={16}>10</Fit></StatusField>
        <Fit w={37}>GRID:</Fit>
        <StatusField $w={84} $green><Fit w={16}>20</Fit></StatusField>
        <Fit w={102}>NETLIST MODE:</Fit>
        <StatusField $w={68}><Fit w={34}>spice</Fit></StatusField>
        <Fit w={267} ml={4}>mouse = 3830 -1260 - selected: 1 path: .</Fit>
      </StatusBar>

      <Wallpaper><Dock><DockArt /></Dock></Wallpaper>

      <TaskBar>
        <Shades>
          <svg width="1920" height="72" viewBox="0 1008 1920 72" fill="#2d4b5c">
            <path d="M0 1008h22L0 1022zM301 1008h21l-66 72h-18zM757 1008h20l-64 72h-23z" opacity=".85" />
            <path d="M1358 1008h26l-66 72h-29z" opacity=".8" />
          </svg>
        </Shades>
        <StartArea>
          <svg width="32" height="33" viewBox="0 0 32 33" fill="#fff"><path d="M0 5l14-2v13H0zM15.500 2.800 32 0v16H15.500zM0 17.500h14V30L0 28zM15.500 17.500H32V33l-16.500-2.500z" /></svg>
          <Grip>
            <svg width="12" height="60" viewBox="0 0 12 60">
              {gripRows.map((y) => [0, 4, 8].map((x) => (
                <g key={`${x}-${y}`}><rect x={x + 1} y={y} width="2" height="2" fill="#b9d8ee" /><rect x={x} y={y + 1} width="2" height="2" fill="#10283a" /></g>
              )))}
            </svg>
          </Grip>
        </StartArea>
        {TASKS.map(([name, on, focus]) => (
          <TaskButton key={name} $on={on} $focus={focus}>{icons[name]}</TaskButton>
        ))}
        <Keyboard>
          <svg width="15" height="11" viewBox="0 0 15 11"><rect x=".5" y=".5" width="14" height="10" fill="#163a52" stroke="#fff" /><path d="M3 3.500h10M3 5.500h10" stroke="#fff" strokeDasharray="1 1" /><path d="M4 8h7" stroke="#fff" /></svg>
        </Keyboard>
        <Tray>
          <TrayIcon $mt={33}><svg width="12" height="6" viewBox="0 0 12 6"><path d="M6 0l5.500 5.500H.5z" fill="#fff" stroke="#1a5478" strokeWidth=".6" /></svg></TrayIcon>
          <TrayIcon $mt={28} $ml={17}>
            <svg width="17" height="18" viewBox="0 0 17 18" fill="#fff" stroke="#164a66"><path d="M.5 13.500h3v4h-3zM3.500 10.500h3v7h-3zM6.500 7.500h3v10h-3zM9.500 4h3v13.500h-3zM12.500.5h3.500v17h-3.500z" /></svg>
          </TrayIcon>
          <TrayIcon $mt={26} $ml={14}>
            <svg width="18" height="20" viewBox="0 0 18 20"><path d="M.5 5.500h3.500L9.500.5v19L4 14.500H.5z" fill="#fff" stroke="#164a66" /><path d="M1.500 6.500h2v7h-2z" fill="#999" /><path d="M14 6c2 2.500 2 6 0 8.500" stroke="#fff" fill="none" strokeWidth="1.300" /></svg>
          </TrayIcon>
          <Clock>
            <Fit w={51} squeeze>4:05 PM</Fit>
            <Fit w={66} squeeze>12/2/2021</Fit>
          </Clock>
        </Tray>
      </TaskBar>

      <Dialog>
        <DialogTitle>
          <DialogIcon />
          <TitleSpring $w={222} />
          <Fit w={101}>Edit Properties</Fit>
          <DialogButtons>
            {["up", "min", "max", "close"].map((k) => <WinGlyph key={k} kind={k} color="#f4f4f4" outline="#777" />)}
          </DialogButtons>
        </DialogTitle>
        <DialogBody>
          <Row $h={22} $pl={2}>
            <Fit w={33}>Path:</Fit>
            <Entry $w={368} $ml={4}><Fit w={364}>/usr/share/pdk/sky130A/libs.tech/xschem/sky130_fd_pr</Fit></Entry>
          </Row>
          <Row $h={32} $pl={5}>
            <Fit w={48}>Symbol</Fit>
            <Entry $w={244} $ml={12} $white><Fit w={196}>sky130_fd_pr/pfet3_01v8.sym</Fit></Entry>
            <TkButton $w={46}><Fit w={20}>OK</Fit></TkButton>
            <TkButton $w={70}><Fit w={43}>Cancel</Fit></TkButton>
            <TkButton $w={57}><Fit w={31}>Load</Fit></TkButton>
            <TkButton $w={48}><Fit w={21}>Del</Fit></TkButton>
            <TkButton $w={74}><Fit w={47}>Browse</Fit></TkButton>
          </Row>
          <Row $h={22} $pl={0}>
            <Check $ml={9} /><Fit w={138}>No change properties</Fit>
            <Check $ml={13} /><Fit w={171}>Preserve unchanged props</Fit>
            <Check $ml={13} /><Fit w={60}>Copy cell</Fit>
            <Fit w={57} ml={17}>Edit Attr:</Fit>
            <Combo>
              <Fit w={43}>&lt;ALL&gt;</Fit>
              <ComboArrow><svg width="8" height="5" viewBox="0 0 8 5"><path d="M0 1h8L4 5z" fill="#000" /></svg></ComboArrow>
            </Combo>
          </Row>
          <EditorGrid>
            <Editor>
              {PROPS.map((t) => <Line key={t}>{t}{t === "nf=3" && <Caret />}</Line>)}
            </Editor>
            <VScroll>
              <Arrow dir="up" />
              <ScrollRun><Thumb $w={11} $h={157} /></ScrollRun>
              <Arrow dir="down" />
            </VScroll>
            <HScroll>
              <Arrow dir="left" />
              <Thumb $w={620} $h={12} $m="0 1px" />
              <Arrow dir="right" />
            </HScroll>
          </EditorGrid>
        </DialogBody>
      </Dialog>
    </Screen>
  );
}
